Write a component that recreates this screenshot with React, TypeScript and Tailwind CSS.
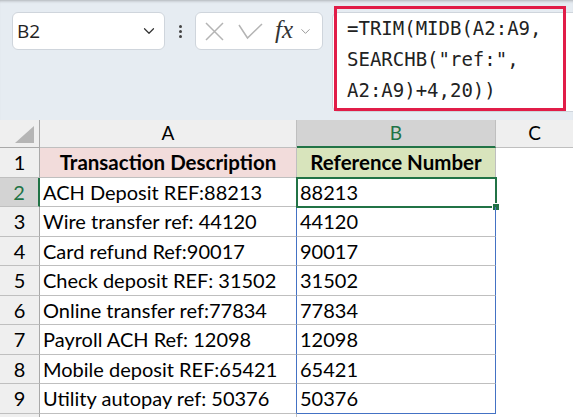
import { ChevronDown } from 'lucide-react';

const rows = [
  { desc: 'ACH Deposit REF:88213', ref: '88213' },
  { desc: 'Wire transfer ref: 44120', ref: '44120' },
  { desc: 'Card refund Ref:90017', ref: '90017' },
  { desc: 'Check deposit REF: 31502', ref: '31502' },
  { desc: 'Online transfer ref:77834', ref: '77834' },
  { desc: 'Payroll ACH Ref: 12098', ref: '12098' },
  { desc: 'Mobile deposit REF:65421', ref: '65421' },
  { desc: 'Utility autopay ref: 50376', ref: '50376' },
];

export default function App() {
  return (
    <div className="w-[573px] h-[417px] overflow-hidden bg-white font-['Lato',sans-serif] text-black">
      <FormulaBar />
      <Sheet />
    </div>
  );
}

function FormulaBar() {
  return (
    <div className="h-[120px] bg-[#e6ecf2] flex items-start pt-[12px] pl-[12px] shadow-[inset_0_3px_3px_-2px_rgba(0,0,0,0.25)]">
      {/* name box */}
      <div className="shrink-0 w-[153px] h-[38px] bg-white border border-[#cfd5dc] rounded-[6px] flex items-center justify-between pl-[4px] pr-[6px]">
        <span className="text-[19px] font-['Open_Sans',sans-serif] text-[#222]">B2</span>
        <ChevronDown size={18} strokeWidth={1.6} className="text-[#333]" />
      </div>

      <div className="shrink-0 w-[4px] ml-[13px] mt-[13px] flex flex-col gap-[2px] items-center">
        <span className="w-[3px] h-[3px] rounded-full bg-[#444]" />
        <span className="w-[3px] h-[3px] rounded-full bg-[#444]" />
        <span className="w-[3px] h-[3px] rounded-full bg-[#444]" />
      </div>

      {/* cancel / enter / function buttons */}
      <div className="shrink-0 ml-[13px] w-[128px] h-[38px] bg-white border border-[#cfd5dc] rounded-[6px] flex items-center pl-[9px]">
        <svg width="19" height="19" viewBox="0 0 19 19" className="shrink-0">
          <path d="M1 1 L18 18 M18 1 L1 18" stroke="#b4b4b4" strokeWidth="1.5" fill="none" />
        </svg>
        <svg width="25" height="17" viewBox="0 0 25 17" className="ml-[14px] shrink-0">
          <path d="M1 2 L9.5 15 L24 1" stroke="#b4b4b4" strokeWidth="1.5" fill="none" />
        </svg>
        <span className="ml-[12px] text-[25px] leading-none italic font-['Liberation_Serif',serif] text-[#333] -mt-[4px]">fx</span>
        <ChevronDown size={15} strokeWidth={1.6} className="ml-[5px] text-[#9a9a9a]" />
      </div>

      {/* formula input */}
      <div className="shrink-0 relative ml-[9px] w-[260px] h-[100px] bg-white border border-[#cfd5dc] rounded-[6px]">
        <div className="absolute -top-[7px] left-[1px] w-[232px] h-[105px] border-[3px] border-[#e11d48] pl-[10px] pt-[4px]">
          <pre className="font-['DejaVu_Sans_Mono',monospace] text-[19px] leading-[31px] text-[#222]">
            {'=TRIM(MIDB(A2:A9,\nSEARCHB("ref:",\nA2:A9)+4,20))'}
          </pre>
        </div>
      </div>
    </div>
  );
}

function Sheet() {
  return (
    <div className="grid grid-cols-[40px_257px_199px_77px]">
      {/* column headers */}
      <div className="h-[28px] bg-[#efefef] border-r border-b border-[#a9a9a9] flex items-end justify-end pr-[5px] pb-[4px]">
        <svg width="19" height="17" viewBox="0 0 19 17">
          <polygon points="19,0 19,17 0,17" fill="#b5b5b5" />
        </svg>
      </div>
      <div className="h-[28px] bg-[#efefef] border-r border-b border-[#bfbfbf] flex items-center justify-center text-[19px]">A</div>
      <div className="h-[28px] bg-[#d3d3d3] border-r border-[#bfbfbf] border-b-2 border-b-[#217346] flex items-center justify-center text-[19px] text-[#217346]">B</div>
      <div className="h-[28px] bg-[#efefef] border-b border-[#bfbfbf] flex items-center justify-center text-[19px]">C</div>

      {/* header row */}
      <div className="h-[29.5px] bg-[#efefef] border-r border-b border-[#bfbfbf] border-r-[#a9a9a9] flex items-center justify-center text-[20px]">1</div>
      <div className="h-[29.5px] bg-[#f2dcdb] border-r border-b border-[#bfbfbf] flex items-center justify-center text-[20.5px] font-bold">Transaction Description</div>
      <div className="h-[29.5px] bg-[#d8e4bc] border-r border-b border-[#bfbfbf] flex items-center justify-center text-[20.5px] font-bold">Reference Number</div>
      <div className="h-[29.5px]" />

      {rows.map((r, i) => {
        const n = i + 2;
        return <Row key={n} n={n} desc={r.desc} value={r.ref} active={n === 2} last={n === 9} />;
      })}

      <div className="h-[10px] bg-[#efefef] border-r border-[#a9a9a9]" />
      <div className="h-[10px] border-r border-[#bfbfbf]" />
      <div className="h-[10px]" />
      <div className="h-[10px]" />
    </div>
  );
}

function Row({ n, desc, value, active, last }: { n: number; desc: string; value: string; active: boolean; last: boolean }) {
  return (
    <>
      <div
        className={`h-[29.5px] border-b border-[#bfbfbf] flex items-center justify-center text-[20px] ${
          active ? 'bg-[#d3d3d3] text-[#217346] border-r-2 border-r-[#217346]' : 'bg-[#efefef] border-r border-r-[#a9a9a9]'
        }`}
      >
        {n}
      </div>
      <div className="h-[29.5px] border-b border-r border-[#bfbfbf] border-r-[#4472c4] flex items-center pl-[3px] text-[20px] whitespace-nowrap">
        {desc}
      </div>
      <div
        className={`relative h-[29.5px] border-r border-r-[#4472c4] flex items-center pl-[3px] text-[20px] ${
          last ? 'border-b border-b-[#4472c4]' : 'border-b border-b-[#bfbfbf]'
        }`}
      >
        {value}
        {active && (
          <div className="absolute -left-[1px] -top-[1px] -right-[2px] -bottom-[2px] border-[2.5px] border-[#217346]">
            <span className="absolute -right-[5px] -bottom-[5px] w-[8px] h-[8px] bg-[#217346] border border-white" />
          </div>
        )}
      </div>
      <div className="h-[29.5px]" />
    </>
  );
}
